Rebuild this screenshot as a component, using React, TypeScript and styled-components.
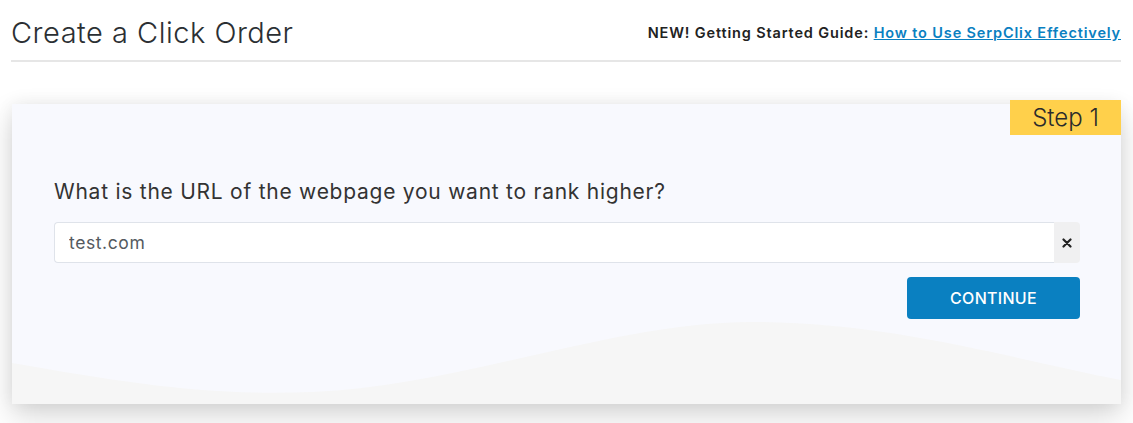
import styled, { createGlobalStyle } from "styled-components";

const GlobalStyle = createGlobalStyle`
  body {
    margin: 0;
    background: #ffffff;
    font-family: Inter, "Open Sans", sans-serif;
    color: #333333;
  }
`;

const Page = styled.div`
  padding: 0 12px 40px 11px;
`;

const Header = styled.header`
  height: 56px;
  padding-top: 4px;
  display: flex;
  justify-content: space-between;
  align-items: center;
  border-bottom: 2px solid #e6e6e6;
`;

const Title = styled.h1`
  margin: 0;
  font-size: 29px;
  font-weight: 300;
  color: #2b2f33;
  letter-spacing: 0.5px;
`;

const Guide = styled.div`
  font-size: 14.5px;
  font-weight: 600;
  letter-spacing: 0.85px;
  color: #222222;
`;

const GuideLink = styled.a`
  color: #0a80c1;
  text-decoration: underline;
`;

const Card = styled.section`
  position: relative;
  margin: 42px 0 0 1px;
  height: 300px;
  background: #f8f9fe;
  box-shadow: 0 12px 28px rgba(0, 0, 0, 0.16), 0 0 16px rgba(0, 0, 0, 0.06);
`;

const Wave = styled.svg`
  position: absolute;
  left: 0;
  bottom: 0;
  width: 100%;
  height: 100%;
  display: block;
`;

const Badge = styled.div`
  position: absolute;
  top: -4px;
  right: 0;
  width: 111px;
  height: 35px;
  background: #ffd04b;
  display: flex;
  align-items: center;
  justify-content: center;
  font-size: 24px;
  font-weight: 300;
  color: #2b2b2b;
`;

const Body = styled.div`
  position: relative;
  padding: 73px 41px 0 42px;
  display: flex;
  flex-direction: column;
`;

const Question = styled.label`
  font-size: 21px;
  line-height: 30px;
  letter-spacing: 0.75px;
  color: #333333;
  margin-bottom: 15px;
`;

const InputGroup = styled.div`
  display: flex;
  height: 41px;
`;

const UrlInput = styled.input`
  flex: 1;
  box-sizing: border-box;
  border: 1px solid #dfe3ea;
  border-right: none;
  border-radius: 4px 0 0 4px;
  background: #ffffff;
  padding: 0 14px;
  font-family: inherit;
  font-size: 17.5px;
  letter-spacing: 0.6px;
  color: #555a60;
  outline: none;
`;

const ClearButton = styled.button`
  width: 26px;
  border: none;
  border-radius: 0 4px 4px 0;
  background: #f0f0f1;
  display: flex;
  align-items: center;
  justify-content: center;
  padding: 0;
  cursor: pointer;
`;

const Actions = styled.div`
  display: flex;
  justify-content: flex-end;
  margin-top: 14px;
`;

const ContinueButton = styled.button`
  width: 173px;
  height: 42px;
  border: none;
  border-radius: 4px;
  background: #0a80c1;
  color: #ffffff;
  font-family: inherit;
  font-size: 16px;
  font-weight: 500;
  letter-spacing: 0.3px;
  cursor: pointer;
`;

const App = () => {
  return (
    <>
      <GlobalStyle />
      <Page>
        <Header>
          <Title>Create a Click Order</Title>
          <Guide>
            NEW! Getting Started Guide:{" "}
            <GuideLink href="#">How to Use SerpClix Effectively</GuideLink>
          </Guide>
        </Header>
        <Card>
          <Wave viewBox="0 0 1109 300" preserveAspectRatio="none">
            <path
              d="M0 259 C120 280 200 292 300 288 C450 282 600 218 740 218 C880 218 1000 255 1109 276 L1109 300 L0 300 Z"
              fill="#f6f6f6"
            />
          </Wave>
          <Badge>Step 1</Badge>
          <Body>
            <Question htmlFor="url">
              What is the URL of the webpage you want to rank higher?
            </Question>
            <InputGroup>
              <UrlInput id="url" defaultValue="test.com" />
              <ClearButton aria-label="Clear">
                <svg width="10" height="10" viewBox="0 0 10 10">
                  <path d="M1.5 1.5 L8.5 8.5 M8.5 1.5 L1.5 8.5" stroke="#222" strokeWidth="2.2" strokeLinecap="round" />
                </svg>
              </ClearButton>
            </InputGroup>
            <Actions>
              <ContinueButton>CONTINUE</ContinueButton>
            </Actions>
          </Body>
        </Card>
      </Page>
    </>
  );
};

export default App;
